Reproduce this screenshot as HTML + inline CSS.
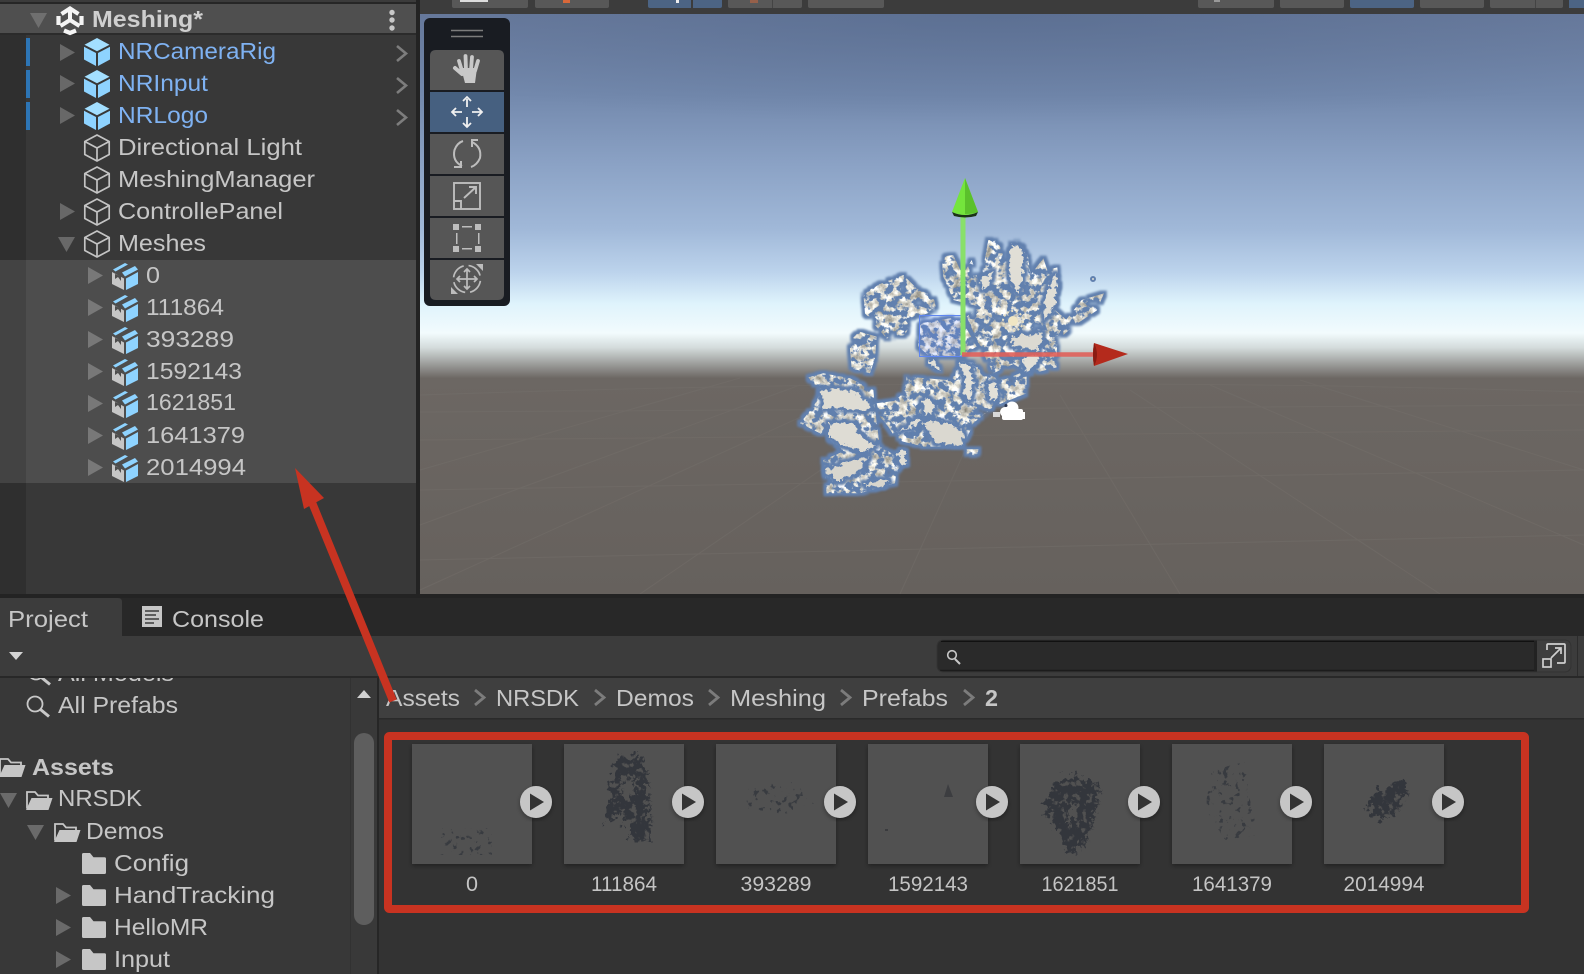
<!DOCTYPE html>
<html><head><meta charset="utf-8"><title>Unity Meshing</title>
<style>
html,body{margin:0;padding:0;background:#333;width:1584px;height:974px;overflow:hidden}
svg{display:block}
text{font-family:"Liberation Sans",sans-serif;font-size:23.5px;fill:#c6c6c6}
.b{fill:#7fb2f2}
.l{font-size:21px;fill:#c4c4c4;text-anchor:middle}
</style></head><body>
<svg width="1584" height="974" viewBox="0 0 1584 974" xmlns="http://www.w3.org/2000/svg">
<defs>
<linearGradient id="sky" x1="0" y1="14" x2="0" y2="594" gradientUnits="userSpaceOnUse">
<stop offset="0" stop-color="#697b9d"/><stop offset=".14" stop-color="#7389ad"/><stop offset=".255" stop-color="#8aa1c4"/><stop offset=".37" stop-color="#a0b8d8"/><stop offset=".445" stop-color="#bcd3ec"/><stop offset=".5" stop-color="#dff3fc"/><stop offset=".55" stop-color="#f2fbfd"/><stop offset=".575" stop-color="#d4dcdc"/><stop offset=".6" stop-color="#a3a5a3"/><stop offset=".628" stop-color="#6c6763"/><stop offset="1" stop-color="#66615d"/>
</linearGradient>
<radialGradient id="dk" cx=".5" cy="0" r=".65"><stop offset="0" stop-color="#4f6488" stop-opacity=".5"/><stop offset="1" stop-color="#4f6488" stop-opacity="0"/></radialGradient>
<filter id="mf" filterUnits="userSpaceOnUse" x="790" y="220" width="340" height="300" color-interpolation-filters="sRGB">
<feTurbulence type="fractalNoise" baseFrequency="0.13" numOctaves="4" seed="7" result="n"/>
<feColorMatrix in="n" type="matrix" values="0 .9 0 0 .42 0 .9 0 0 .41 0 .9 0 0 .37 10 0 0 0 -4.400" result="w"/>
<feComposite in="w" in2="SourceAlpha" operator="in" result="bits"/>
<feMorphology in="bits" operator="dilate" radius="3" result="d"/>
<feFlood flood-color="#6180ae"/><feComposite in2="d" operator="in" result="o"/>
<feGaussianBlur in="o" stdDeviation="1" result="g"/>
<feMerge><feMergeNode in="g"/><feMergeNode in="bits"/></feMerge>
</filter>
<filter id="sf" filterUnits="userSpaceOnUse" x="790" y="220" width="340" height="300" color-interpolation-filters="sRGB">
<feTurbulence type="fractalNoise" baseFrequency="0.2" numOctaves="3" seed="11" result="n"/>
<feDisplacementMap in="SourceGraphic" in2="n" scale="9" xChannelSelector="R" yChannelSelector="G" result="s"/>
<feMorphology in="s" operator="dilate" radius="3" result="d"/>
<feFlood flood-color="#6180ae"/><feComposite in2="d" operator="in" result="o"/>
<feGaussianBlur in="o" stdDeviation="1" result="g"/>
<feMerge><feMergeNode in="g"/><feMergeNode in="s"/></feMerge>
</filter>
<filter id="tf" filterUnits="userSpaceOnUse" x="412" y="744" width="1040" height="120" color-interpolation-filters="sRGB">
<feTurbulence type="fractalNoise" baseFrequency="0.16" numOctaves="4" seed="3" result="n"/>
<feDisplacementMap in="SourceAlpha" in2="n" scale="22" xChannelSelector="R" yChannelSelector="G" result="s"/>
<feColorMatrix in="n" type="matrix" values="0 0 0 0 .2 0 0 0 0 .21 0 0 0 0 .235 10 0 0 0 -3.200" result="w"/>
<feComposite in="w" in2="s" operator="in"/>
</filter>
<filter id="ts" filterUnits="userSpaceOnUse" x="412" y="744" width="1040" height="120" color-interpolation-filters="sRGB">
<feTurbulence type="fractalNoise" baseFrequency="0.17" numOctaves="3" seed="9" result="n"/>
<feColorMatrix in="n" type="matrix" values="0 0 0 0 .22 0 0 0 0 .23 0 0 0 0 .25 14 0 0 0 -8.600" result="w"/>
<feComposite in="w" in2="SourceAlpha" operator="in"/>
</filter>
<filter id="sh" x="-10%" y="-10%" width="120%" height="120%"><feDropShadow dx="0" dy="2" stdDeviation="2.5" flood-color="#000" flood-opacity=".35"/></filter>
<clipPath id="ac"><rect x="0" y="678" width="350" height="60"/></clipPath>
<g id="pf"><path d="M13 0L25.500 6.700 13 13.200 .5 6.700Z" fill="#a3dfff"/><path d="M0 8.700L12 15V28L0 21.500Z" fill="#8ed3ff"/><path d="M26 8.700L14 15V28L26 21.500Z" fill="#8ed3ff"/></g>
<g id="oc" fill="none" stroke="#c4c4c4" stroke-width="1.700" stroke-linejoin="round"><path d="M13 1L25.200 7.500V20.500L13 27 .8 20.500V7.500Z"/><path d="M.8 7.500L13 14 25.200 7.500M13 14V27"/></g>
<g id="mc"><path d="M0 10L12 16.500V28L0 22Z" fill="#c6c6c6"/><path d="M3 12V17L6 15 9 19V14.500Z" fill="#4d4d4d"/><path d="M14 16.500L26 10V22L14 28Z" fill="#8ed3ff"/><path d="M1 7.500L13 1 16 2.500 3.500 9.500Z" fill="#8ed3ff"/><path d="M10 10.500L23 4 26 7.500 13 14.500Z" fill="#8ed3ff"/></g>
<path id="tr" d="M0 0L15 8.500 0 17Z"/>
<path id="td" d="M0 0H17L8.500 15Z"/>
<path id="chev" d="M0 0L9 7.500 0 15" fill="none" stroke="#7d7d7d" stroke-width="2.600"/>
<path id="bc" d="M0 0L9 7.500 0 15" fill="none" stroke="#7c7c7c" stroke-width="2.800"/>
<path id="fc" d="M0 1.500Q0 0 1.500 0H8L11.500 4.200H22.500Q24 4.200 24 5.700V19.500Q24 21 22.500 21H1.500Q0 21 0 19.500Z" fill="#c6c6c6"/>
<g id="fo" fill="none"><path d="M1 18.500V2H9L12 5.500H22V8" stroke="#c6c6c6" stroke-width="1.800"/><path d="M5.500 8H26.500L22.500 20H0Z" fill="#c6c6c6"/></g>
<g id="mag" fill="none" stroke="#c8c8c8"><circle cx="9" cy="9" r="7.500" stroke-width="1.800"/><path d="M14.500 14.500L23 21.500" stroke-width="3"/></g>
<g id="play"><circle cx="0" cy="0" r="16" fill="#c6c6c6" filter="url(#sh)"/><path d="M-6-8.500L8 0-6 8.500Z" fill="#333"/></g>
</defs>

<!-- base -->
<rect width="1584" height="974" fill="#333"/>

<!-- hierarchy -->
<rect x="0" y="0" width="416" height="594" fill="#383838"/>
<rect x="0" y="35" width="26" height="559" fill="#2f2f2f"/>
<rect x="0" y="0" width="416" height="2" fill="#3b3b3b"/>
<rect x="0" y="2" width="416" height="2" fill="#262626"/>
<rect x="0" y="4" width="416" height="29" fill="#4f4f4f"/>
<rect x="0" y="33" width="416" height="2" fill="#2b2b2b"/>
<rect x="0" y="260" width="26" height="223" fill="#434343"/>
<rect x="26" y="260" width="390" height="223" fill="#4d4d4d"/>
<use href="#td" x="30" y="13" fill="#6f6f6f"/>
<!-- unity logo -->
<g fill="none" stroke="#f4f4f4"><path d="M70 9L70 20M70 20L60.500 26M70 20L79.500 26" stroke-width="4"/><path d="M61.500 14L70 8.500 78.500 14M81.500 16V25M76 30.500L70 33 64 30.500M58.500 25V16" stroke-width="4.200"/></g>
<text x="92" y="27" font-weight="bold" textLength="111" lengthAdjust="spacingAndGlyphs" style="fill:#cfcfcf">Meshing*</text>
<g fill="#c8c8c8"><circle cx="392" cy="12.500" r="2.700"/><circle cx="392" cy="20" r="2.700"/><circle cx="392" cy="28" r="2.700"/></g>
<g fill="#2d75b5"><rect x="26" y="38" width="4" height="28"/><rect x="26" y="70" width="4" height="28"/><rect x="26" y="102" width="4" height="28"/></g>
<g fill="#686868"><use href="#tr" x="60" y="44"/><use href="#tr" x="60" y="75"/><use href="#tr" x="60" y="107"/><use href="#tr" x="60" y="203"/><use href="#td" x="58" y="237"/></g>
<use href="#pf" x="84" y="38"/><use href="#pf" x="84" y="70"/><use href="#pf" x="84" y="102"/>
<use href="#oc" x="84" y="134"/><use href="#oc" x="84" y="166"/><use href="#oc" x="84" y="198"/><use href="#oc" x="84" y="230"/>
<text class="b" x="118" y="59" textLength="158" lengthAdjust="spacingAndGlyphs">NRCameraRig</text>
<text class="b" x="118" y="91" textLength="90" lengthAdjust="spacingAndGlyphs">NRInput</text>
<text class="b" x="118" y="123" textLength="90" lengthAdjust="spacingAndGlyphs">NRLogo</text>
<text x="118" y="155" textLength="184" lengthAdjust="spacingAndGlyphs">Directional Light</text>
<text x="118" y="187" textLength="197" lengthAdjust="spacingAndGlyphs">MeshingManager</text>
<text x="118" y="219" textLength="165" lengthAdjust="spacingAndGlyphs">ControllePanel</text>
<text x="118" y="251" textLength="88" lengthAdjust="spacingAndGlyphs">Meshes</text>
<use href="#chev" x="397" y="46"/><use href="#chev" x="397" y="78"/><use href="#chev" x="397" y="110"/>
<g fill="#787878"><use href="#tr" x="88" y="267"/><use href="#tr" x="88" y="299"/><use href="#tr" x="88" y="331"/><use href="#tr" x="88" y="363"/><use href="#tr" x="88" y="395"/><use href="#tr" x="88" y="427"/><use href="#tr" x="88" y="459"/></g>
<use href="#mc" x="112" y="262"/><use href="#mc" x="112" y="294"/><use href="#mc" x="112" y="326"/><use href="#mc" x="112" y="358"/><use href="#mc" x="112" y="390"/><use href="#mc" x="112" y="422"/><use href="#mc" x="112" y="454"/>
<text x="146" y="283" textLength="14" lengthAdjust="spacingAndGlyphs">0</text>
<text x="146" y="315" textLength="78" lengthAdjust="spacingAndGlyphs">111864</text>
<text x="146" y="347" textLength="88" lengthAdjust="spacingAndGlyphs">393289</text>
<text x="146" y="379" textLength="96" lengthAdjust="spacingAndGlyphs">1592143</text>
<text x="146" y="410" textLength="90" lengthAdjust="spacingAndGlyphs">1621851</text>
<text x="146" y="443" textLength="99" lengthAdjust="spacingAndGlyphs">1641379</text>
<text x="146" y="475" textLength="100" lengthAdjust="spacingAndGlyphs">2014994</text>

<!-- scene top bar -->
<rect x="416" y="0" width="4" height="594" fill="#232323"/>
<rect x="420" y="0" width="1164" height="14" fill="#3c3c3c"/>
<g fill="#585858">
<path d="M452 0H528V6Q528 8 526 8H454Q452 8 452 6Z"/><path d="M535 0H609V6Q609 8 607 8H537Q535 8 535 6Z"/>
<path d="M728 0H802V6Q802 8 800 8H730Q728 8 728 6Z"/><path d="M808 0H884V6Q884 8 882 8H810Q808 8 808 6Z"/>
<path d="M1198 0H1274V6Q1274 8 1272 8H1200Q1198 8 1198 6Z"/><path d="M1280 0H1344V6Q1344 8 1342 8H1282Q1280 8 1280 6Z"/>
<path d="M1420 0H1484V6Q1484 8 1482 8H1422Q1420 8 1420 6Z"/><path d="M1490 0H1563V6Q1563 8 1561 8H1492Q1490 8 1490 6Z"/>
</g>
<g fill="#4c6484"><path d="M648 0H722V6Q722 8 720 8H650Q648 8 648 6Z"/><path d="M1350 0H1414V6Q1414 8 1412 8H1352Q1350 8 1350 6Z"/><rect x="1569" y="0" width="15" height="8"/></g>
<rect x="691" y="0" width="2" height="8" fill="#3c3c3c"/><rect x="772" y="0" width="1" height="8" fill="#444"/><rect x="1535" y="0" width="1" height="8" fill="#444"/>
<rect x="460" y="0" width="28" height="2" fill="#ddd"/><rect x="563" y="0" width="7" height="3" fill="#d8683a"/><rect x="676" y="0" width="3" height="3" fill="#eee"/><rect x="750" y="0" width="8" height="3" fill="#96604a"/><rect x="1214" y="0" width="6" height="2" fill="#999"/>

<!-- scene -->
<rect x="420" y="14" width="1164" height="580" fill="url(#sky)"/>
<rect x="420" y="14" width="1164" height="170" fill="url(#dk)"/>
<g stroke="#77726d" stroke-width="1" fill="none" opacity=".4">
<path d="M420 395Q700 385 1000 384T1584 392M420 412L1584 405M420 440L1584 430M420 490L1584 470M420 560L1584 535"/>
<path d="M420 470L740 378M420 525L800 385M420 590L860 390M640 594L930 395M900 594L990 395M1180 594L1060 395M1440 594L1130 390M1584 545L1210 385M1584 470L1300 380"/>
</g>

<!-- mesh speckled -->
<g filter="url(#mf)"><g transform="translate(780 160) scale(.3333)" fill="#000">
<path d="M250 400L300 372 370 345 410 385 460 410 470 450 400 475 375 525 320 535 285 495 255 460Z"/>
<path d="M238 515L290 530 285 595 270 640 215 625 208 545Z"/>
<path d="M485 290L520 285 548 345 575 300 600 375 625 240 650 240 680 300 710 245 742 275 752 345 790 295 802 330 832 322 838 375 820 445 860 480 832 530 830 622 750 642 700 612 640 640 600 560 560 470 600 440 520 420 490 350Z"/>
<path d="M850 490L905 420 972 400 950 452 885 495 850 525Z"/>
<path d="M420 490L540 470 590 560 540 590 450 590 415 560Z"/>
<path d="M85 652L130 640 210 655 280 690 290 790 300 860 370 900 340 960 240 990 140 1000 135 930 190 880 140 830 60 790 100 740 120 700Z"/>
<path d="M380 650L500 660 580 620 660 660 740 650 740 700 640 740 580 790 550 860 430 860 350 840 300 760 370 700Z"/>
<path d="M530 600L590 610 600 650 670 660 720 640 745 690 690 700 640 740 590 780 555 800 520 720Z"/>
<path d="M290 730L400 715 430 720 470 740 520 800 430 790 350 830 300 770Z"/>
<path d="M130 900L200 870 280 890 350 930 345 970 240 1000 140 1000Z"/>
<path d="M560 868L596 868 592 888 560 885Z"/>
</g></g>
<!-- mesh solid patches -->
<g filter="url(#sf)"><g transform="translate(780 160) scale(.3333)">
<path d="M125 695L170 685 235 700 270 735 258 755 190 745 130 745Z" fill="#dedcd4"/>
<path d="M150 790L215 785 245 830 285 860 250 875 180 850 145 825Z" fill="#dedcd4"/>
<path d="M135 930L205 905 265 890 230 940 175 965Z" fill="#d8d6ce"/>
<path d="M428 785L510 790 552 822 548 858 470 848Z" fill="#dad8d0"/>
<path d="M622 670L648 668 652 712 632 726Z" fill="#e2e0d8"/>
<path d="M535 608L562 612 582 660 568 725 548 695 560 665Z" fill="#e2e0d8"/>
<path d="M255 968L300 960 330 966 303 982 255 982Z" fill="#d8d6ce"/>
<path d="M604 352L636 335 628 378 604 392Z" fill="#e0ded6"/>
<path d="M695 255L725 265 730 330 715 400 685 335Z" fill="#e0ded6"/>
<path d="M725 592L780 584 758 630 738 634Z" fill="#e2e0d8"/>
<path d="M445 602L468 602 482 636 460 622Z" fill="#e2e0d8"/>
<path d="M428 722L452 718 466 745 436 766Z" fill="#e0ded6"/>
<path d="M358 820L418 772 423 785 370 815Z" fill="#e0ded6"/>
<path d="M352 878L373 872 382 918 365 912Z" fill="#e0ded6"/>
<path d="M800 400L830 340 825 440 790 480Z" fill="#e0ded6"/>
<path d="M690 530L790 520 775 570 700 560Z" fill="#dcdad2"/>
</g></g>
<circle cx="1093" cy="279" r="2" fill="#dedcd4" stroke="#6180ae" stroke-width="2"/>
<!-- gizmo -->
<rect x="919.500" y="315.500" width="42.500" height="41" fill="#6a8cff" fill-opacity=".18" stroke="#5f86f0" stroke-width="1"/>
<circle cx="1013" cy="321" r="5" fill="#f0e6c4"/>
<circle cx="1013" cy="321" r="10" fill="none" stroke="#e8e0c6" stroke-width="2" stroke-dasharray="2 2.500"/>
<path d="M963 355V214" stroke="#88e06a" stroke-width="5"/>
<path d="M965 178L952 212Q965 218 978 212Z" fill="#74e53c"/>
<path d="M965 178L965 214Q972 214 978 212Z" fill="#5bc12b"/>
<path d="M952 212Q965 218 978 212L976 216Q965 219 954 216Z" fill="#1c3316"/>
<path d="M962 354.500H1096" stroke="#e0605a" stroke-width="4.500" stroke-opacity=".9"/>
<path d="M1128 354L1094 343Q1092 355 1094 366Z" fill="#b42a1c"/>
<path d="M1094 343Q1092 355 1094 366Q1100 355 1094 343Z" fill="#8a1c12"/>
<!-- camera gizmo -->
<g fill="#fff"><circle cx="1012" cy="408" r="6.500"/><circle cx="1005" cy="412" r="5"/><rect x="1002" y="409" width="21" height="11" rx="2"/><rect x="1021" y="412" width="4" height="7"/><rect x="993" y="412" width="7" height="5" fill="#d8d8d8"/></g>
<circle cx="1006" cy="405.500" r="1.500" fill="#2a3550"/>

<!-- tool palette -->
<rect x="424" y="18" width="86" height="288" rx="6" fill="#191c22"/>
<path d="M451 30.500H483M451 36.500H483" stroke="#7c7c7c" stroke-width="1.400"/>
<path d="M430 56Q430 50 436 50H498Q504 50 504 56V90H430Z" fill="#565656"/>
<rect x="430" y="92" width="74" height="40" fill="#466080"/>
<rect x="430" y="134" width="74" height="40" fill="#565656"/>
<rect x="430" y="176" width="74" height="40" fill="#565656"/>
<rect x="430" y="218" width="74" height="40" fill="#565656"/>
<path d="M430 260H504V294Q504 300 498 300H436Q430 300 430 294Z" fill="#565656"/>
<!-- hand -->
<g stroke="#c8c8c8" stroke-linecap="round" fill="none"><path d="M462 71L459 61M466 70L465.500 56M471 70L472 57M475 71L478 61" stroke-width="3.800"/><path d="M462 74L455 68" stroke-width="4"/><path d="M461 68H477L475 83H465Z" fill="#c8c8c8" stroke="none"/></g>
<!-- move -->
<g fill="none" stroke="#f0f0f0" stroke-width="1.800"><path d="M467 99V107M467 117V126M453 112H462M472 112H481M463 101L467 97 471 101M463 123L467 127 471 123M456 108L452 112 456 116M478 108L482 112 478 116"/></g>
<!-- rotate -->
<g fill="none" stroke="#bdbdbd" stroke-width="2"><path d="M462 166Q452 161 454.500 150Q457 143 463 141M472 142Q482 147 480 158Q477 165 471 167"/><path d="M478 140H472V147M454 167H461V161"/></g>
<!-- scale -->
<g fill="none" stroke="#bdbdbd" stroke-width="1.900"><rect x="454" y="183" width="26" height="26"/><path d="M454 201H461V209M464 198L476 187M469 187H476V194"/></g>
<!-- rect -->
<g fill="#bdbdbd"><rect x="453" y="224" width="6" height="6"/><rect x="475" y="224" width="6" height="6"/><rect x="453" y="246" width="6" height="6"/><rect x="475" y="246" width="6" height="6"/><rect x="462" y="226" width="10" height="1.500"/><rect x="462" y="248" width="10" height="1.500"/><rect x="456" y="233" width="1.500" height="11"/><rect x="478" y="233" width="1.500" height="11"/></g>
<!-- transform -->
<g fill="none" stroke="#bdbdbd" stroke-width="1.700"><circle cx="467" cy="279" r="13.500" stroke-dasharray="16 5" stroke-dashoffset="-2"/><path d="M467 270V289M458 279H476M464 272L467 269 470 272M464 286L467 289 470 286M460 276L457 279 460 282M474 276L477 279 474 282"/></g>
<path d="M476 264H483V271ZM451 294H458L451 287Z" fill="#bdbdbd"/>

<!-- bottom panels -->
<rect x="0" y="594" width="1584" height="4" fill="#232323"/>
<rect x="0" y="598" width="1584" height="38" fill="#282828"/>
<path d="M0 598H118Q122 598 122 602V636H0Z" fill="#3c3c3c"/>
<text x="8" y="627" textLength="80" lengthAdjust="spacingAndGlyphs">Project</text>
<rect x="142" y="606" width="20" height="21" fill="#c6c6c6"/>
<path d="M145 611H159M145 615H156M145 619H159M145 623H154" stroke="#3a3a3a" stroke-width="1.500"/>
<text x="172" y="627" textLength="92" lengthAdjust="spacingAndGlyphs">Console</text>
<!-- left project pane -->
<rect x="0" y="678" width="377" height="296" fill="#383838"/>
<g clip-path="url(#ac)"><text x="58" y="681" textLength="116" lengthAdjust="spacingAndGlyphs">All Models</text><use href="#mag" x="27" y="663"/></g>
<use href="#mag" x="26" y="695"/>
<text x="58" y="713" textLength="120" lengthAdjust="spacingAndGlyphs">All Prefabs</text>
<use href="#fo" x="-1" y="757"/>
<text x="32" y="775" font-weight="bold" textLength="82" lengthAdjust="spacingAndGlyphs">Assets</text>
<use href="#td" x="0" y="793" fill="#6a6a6a"/>
<use href="#fo" x="26" y="790"/>
<text x="58" y="806" textLength="84" lengthAdjust="spacingAndGlyphs">NRSDK</text>
<use href="#td" x="27" y="825" fill="#6a6a6a"/>
<use href="#fo" x="54" y="822"/>
<text x="86" y="839" textLength="78" lengthAdjust="spacingAndGlyphs">Demos</text>
<use href="#fc" x="82" y="853"/>
<text x="114" y="871" textLength="75" lengthAdjust="spacingAndGlyphs">Config</text>
<g fill="#6a6a6a"><use href="#tr" x="56" y="887"/><use href="#tr" x="56" y="919"/><use href="#tr" x="56" y="951"/></g>
<use href="#fc" x="82" y="885"/>
<text x="114" y="903" textLength="161" lengthAdjust="spacingAndGlyphs">HandTracking</text>
<use href="#fc" x="82" y="917"/>
<text x="114" y="935" textLength="94" lengthAdjust="spacingAndGlyphs">HelloMR</text>
<use href="#fc" x="82" y="949"/>
<text x="114" y="967" textLength="56" lengthAdjust="spacingAndGlyphs">Input</text>
<rect x="351" y="678" width="26" height="296" fill="#393939"/>
<rect x="350" y="678" width="1" height="296" fill="#323232"/>
<path d="M357 698L364 690 371 698Z" fill="#d0d0d0"/>
<rect x="354" y="733" width="20" height="192" rx="10" fill="#5e5e5e"/>
<rect x="377" y="678" width="2" height="296" fill="#262626"/>
<!-- toolbar -->
<rect x="0" y="636" width="1584" height="40" fill="#3c3c3c"/>
<rect x="0" y="676" width="1584" height="2" fill="#282828"/>
<path d="M9 652H23L16 660Z" fill="#d4d4d4"/>
<rect x="937" y="640" width="634" height="32" rx="7" fill="#3e3e3e"/>
<path d="M937 647Q937 640 944 640H1535V672H944Q937 672 937 665Z" fill="#2a2a2a"/>
<path d="M941 641H1535" stroke="#111" stroke-width="2"/>
<path d="M940 670.500H1535" stroke="#1c1c1c" stroke-width="1.500"/>
<rect x="1534" y="640" width="3" height="32" fill="#222"/>
<path d="M937 647Q937 640 944 640H1564Q1571 640 1571 647V665Q1571 672 1564 672H944Q937 672 937 665Z" fill="none" stroke="#333" stroke-width="1"/>
<g fill="none" stroke="#c8c8c8"><circle cx="952" cy="655" r="4.300" stroke-width="1.600"/><path d="M955 659L960 664" stroke-width="2"/></g>
<g fill="none" stroke="#cfcfcf" stroke-width="1.700"><path d="M1547 650V645Q1547 644 1548 644H1564Q1565 644 1565 645V662Q1565 663 1564 663H1557"/><rect x="1543" y="659" width="8" height="8"/><path d="M1551 658L1561 648M1555 648H1561V654"/></g>
<rect x="1577" y="636" width="1" height="40" fill="#2c2c2c"/>
<!-- breadcrumb -->
<rect x="379" y="678" width="1205" height="40" fill="#3f3f3f"/>
<rect x="379" y="718" width="1205" height="1.500" fill="#2a2a2a"/>
<text x="386" y="706" textLength="74" lengthAdjust="spacingAndGlyphs">Assets</text>
<use href="#bc" x="475" y="690"/>
<text x="496" y="706" textLength="83" lengthAdjust="spacingAndGlyphs">NRSDK</text>
<use href="#bc" x="595" y="690"/>
<text x="616" y="706" textLength="78" lengthAdjust="spacingAndGlyphs">Demos</text>
<use href="#bc" x="709" y="690"/>
<text x="730" y="706" textLength="96" lengthAdjust="spacingAndGlyphs">Meshing</text>
<use href="#bc" x="841" y="690"/>
<text x="862" y="706" textLength="86" lengthAdjust="spacingAndGlyphs">Prefabs</text>
<use href="#bc" x="964" y="690"/>
<text x="985" y="706" font-weight="bold" textLength="13" lengthAdjust="spacingAndGlyphs">2</text>
<!-- thumbs -->
<g fill="#515151" filter="url(#sh)"><rect x="412" y="744" width="120" height="120"/><rect x="564" y="744" width="120" height="120"/><rect x="716" y="744" width="120" height="120"/><rect x="868" y="744" width="120" height="120"/><rect x="1020" y="744" width="120" height="120"/><rect x="1172" y="744" width="120" height="120"/><rect x="1324" y="744" width="120" height="120"/></g>
<g filter="url(#tf)" fill="#000" fill-rule="evenodd">
<path d="M616 758L640 755 648 770 650 815 652 838 636 842 622 815 606 822 612 790ZM620 780L636 778 636 796 622 798Z"/>
<path d="M1052 785L1072 775 1100 785 1096 815 1085 845 1068 855 1058 830 1046 812 1048 798ZM1066 812L1078 802 1076 816 1070 826Z"/>
<path d="M1376 792L1388 790 1402 778 1408 790 1396 815 1382 820 1366 808Z"/>
</g>
<g filter="url(#ts)" fill="#000">
<path d="M1212 770L1245 762 1250 800 1258 835 1225 840 1205 808Z"/>
<path d="M746 785L795 782 815 805 790 815 746 808Z"/>
<path d="M440 828L492 828 492 855 440 855Z"/>
</g>
<path d="M948 784L953 797H944Z" fill="#3c3d40"/><rect x="885" y="829" width="3" height="2" fill="#3a3b3e"/>
<use href="#play" x="536" y="802"/><use href="#play" x="688" y="802"/><use href="#play" x="840" y="802"/><use href="#play" x="992" y="802"/><use href="#play" x="1144" y="802"/><use href="#play" x="1296" y="802"/><use href="#play" x="1448" y="802"/>
<text class="l" x="472" y="891" textLength="12" lengthAdjust="spacingAndGlyphs">0</text>
<text class="l" x="624" y="891" textLength="66" lengthAdjust="spacingAndGlyphs">111864</text>
<text class="l" x="776" y="891" textLength="71" lengthAdjust="spacingAndGlyphs">393289</text>
<text class="l" x="928" y="891" textLength="80" lengthAdjust="spacingAndGlyphs">1592143</text>
<text class="l" x="1080" y="891" textLength="77" lengthAdjust="spacingAndGlyphs">1621851</text>
<text class="l" x="1232" y="891" textLength="80" lengthAdjust="spacingAndGlyphs">1641379</text>
<text class="l" x="1384" y="891" textLength="81" lengthAdjust="spacingAndGlyphs">2014994</text>

<!-- red annotations -->
<rect x="388" y="736" width="1137" height="173" rx="1.500" fill="none" stroke="#c83321" stroke-width="8"/>
<path d="M393 701L309 495" stroke="#c83321" stroke-width="8"/>
<path d="M295 468L324 498 304 509Z" fill="#c83321"/>
</svg>
</body></html>
